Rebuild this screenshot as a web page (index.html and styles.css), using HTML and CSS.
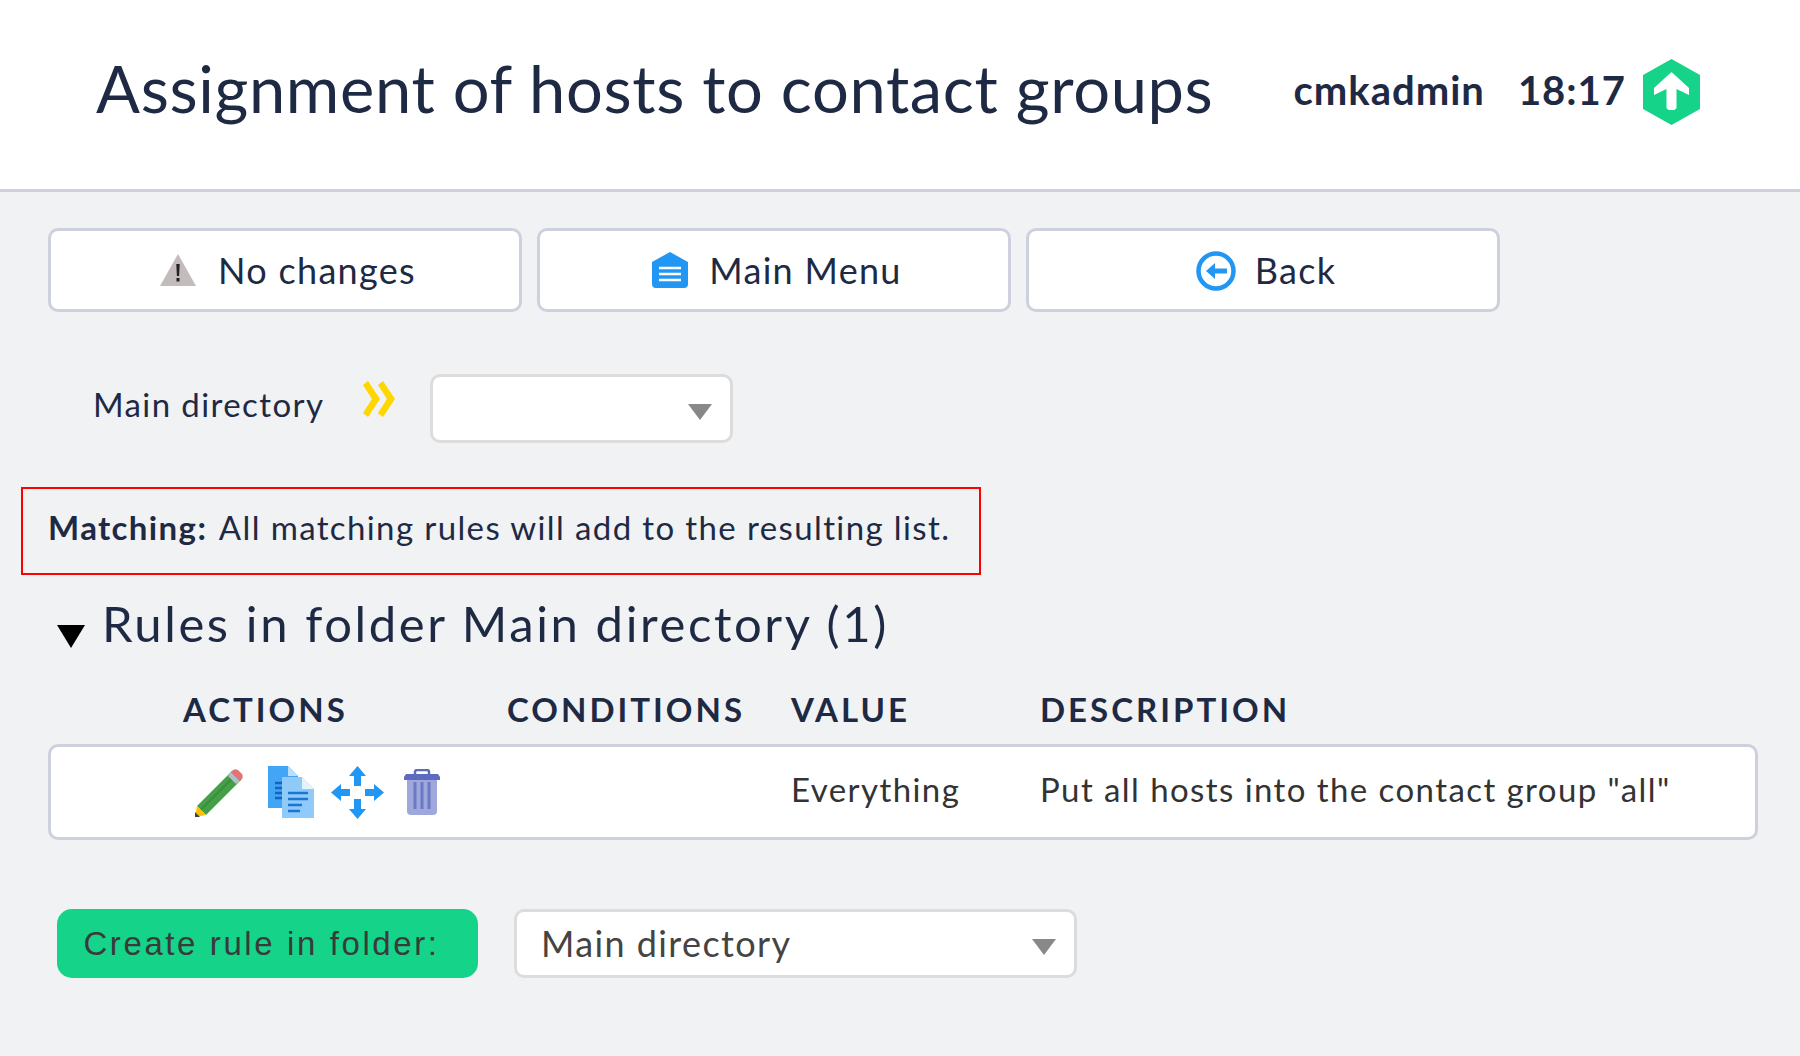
FILE: index.html
```html
<!DOCTYPE html>
<html lang="en">
<head>
<meta charset="utf-8">
<title>Assignment of hosts to contact groups</title>
<link rel="stylesheet" href="styles.css">
</head>
<body>
<header class="top">
  <h1 class="title">Assignment of hosts to contact groups</h1>
  <div class="status">
    <span class="user">cmkadmin</span>
    <span class="clock">18:17</span>
    <svg class="logo" viewBox="0 0 57 66"><path fill="#15d48a" d="M28.500 0 57 16v34L28.500 66 0 50V16z"/><path fill="#fff" d="M28.500 13 46 29v7L33.500 30v19l-2 2h-6l-2-2V30L11 36v-7z"/></svg>
  </div>
</header>
<main class="content">
  <nav class="actions">
    <a class="btn"><svg class="ico-warn" viewBox="0 0 36 32"><path fill="#c4bcbc" d="M18 0 36 32H0z"/><path fill="#222" d="M16.300 10h3.400l-.6 12h-2.200zM16.500 24h3v3.500h-3z"/></svg>No changes</a>
    <a class="btn"><svg class="ico-menu" viewBox="0 0 36 36"><path fill="#2196f3" d="M18 0 36 10v22a4 4 0 0 1-4 4H4a4 4 0 0 1-4-4V10z"/><path stroke="#fff" stroke-width="2.500" d="M7 16h22M7 22h22M7 28h22"/></svg>Main Menu</a>
    <a class="btn"><svg class="ico-back" viewBox="0 0 40 40"><circle cx="20" cy="20" r="17.500" fill="none" stroke="#2196f3" stroke-width="4.500"/><path fill="#2196f3" d="M10 20l9-8v5.500h12v5H19V28z"/></svg>Back</a>
  </nav>
  <div class="folder">
    <span class="folder-name">Main directory</span>
    <svg class="chevrons" viewBox="0 0 32 36"><path fill="#ffd600" d="M0 4 5 0l12 18L5 36l-5-4 9-14zM15 4l5-4 12 18-12 18-5-4 9-14z"/></svg>
    <div class="select select-small"></div>
  </div>
  <p class="matching"><strong>Matching:</strong> All matching rules will add to the resulting list.</p>
  <h2 class="section"><span class="fold"></span>Rules in folder Main directory (1)</h2>
  <div class="thead">
    <span class="c-actions">Actions</span>
    <span class="c-cond">Conditions</span>
    <span class="c-value">Value</span>
    <span class="c-desc">Description</span>
  </div>
  <div class="rule">
    <span class="c-actions icons">
      <svg class="i-pencil" viewBox="0 0 48 48">
        <path fill="#43a047" d="M37 2 46 11 11 46 2 37z"/>
        <path fill="#2e7d32" d="M41.500 6.500 6.500 41.500 5 40 40 5z" opacity=".5"/>
        <path fill="#b0bec5" d="M36 3l9 9-4 3-8-8z"/>
        <path fill="#e57373" d="M38 1c2-1 3-1 5 0l4 4c1 2 1 3 0 5l-2 2-9-9z"/>
        <path fill="#ffc107" d="M2 37l9 9-11 2z"/>
        <path fill="#37474f" d="M0 43l5 5-5 0z"/>
      </svg>
      <svg class="i-copy" viewBox="0 0 46 52">
        <path fill="#42a5f5" d="M0 0h20l10 10v32H0z"/>
        <path fill="#bbdefb" d="M20 0l10 10H20z"/>
        <path stroke="#1565c0" stroke-width="2.500" d="M7 17h8M7 22h8M7 27h8M7 32h8"/>
        <path fill="#90caf9" d="M14 11h20l12 12v29H14z"/>
        <path fill="#e3f2fd" d="M34 11l12 12H34z"/>
        <path stroke="#1976d2" stroke-width="2.500" d="M20 27h20M20 33h20M20 39h14M20 45h12"/>
      </svg>
      <svg class="i-move" viewBox="0 0 53 53">
        <path fill="#2196f3" d="M26.500 0l8.500 10h-5v10h-7V10h-5zM26.500 53l8.500-10h-5V33h-7v10h-5zM0 26.500 10 18v5h9v7h-9v5zM53 26.500 43 18v5h-9v7h9v5z"/>
      </svg>
      <svg class="i-trash" viewBox="0 0 36 46">
        <path fill="#9fa8da" d="M3 9h30v33a4 4 0 0 1-4 4H7a4 4 0 0 1-4-4z"/>
        <path stroke="#5c6bc0" stroke-width="3" opacity=".75" d="M11 13v27M18 13v27M25 13v27"/>
        <path fill="none" stroke="#5c6bc0" stroke-width="2.500" d="M11 6V3a2 2 0 0 1 2-2h10a2 2 0 0 1 2 2v3"/>
        <path fill="#5c6bc0" d="M2 5h32l2 3v3H0V8z"/>
      </svg>
    </span>
    <span class="c-cond"></span>
    <span class="c-value rule-text">Everything</span>
    <span class="c-desc rule-text">Put all hosts into the contact group "all"</span>
  </div>
  <div class="create">
    <button class="submit" type="button">Create rule in folder:</button>
    <div class="select select-wide">Main directory</div>
  </div>
</main>
</body>
</html>
```
FILE: styles.css
```css
* { box-sizing: border-box; }
html, body { margin: 0; height: 100%; }
body {
  background: #f1f2f4;
  color: #1e2a44;
  font-family: Lato, "Noto Sans", sans-serif;
  overflow: hidden;
}
.top {
  height: 192px;
  background: #fff;
  border-bottom: 3px solid #cfd0de;
  display: flex;
  align-items: center;
  justify-content: space-between;
  padding: 0 100px 5px 96px;
}
.title {
  margin: 0 0 9px;
  font-size: 65px;
  font-weight: 400;
  letter-spacing: .65px;
}
.status { display: flex; align-items: center; font-size: 40px; font-weight: 700; letter-spacing: 1px; }
.user, .clock { margin-bottom: 5px; }
.clock { margin-left: 33px; }
.logo { width: 57px; height: 66px; margin-left: 17px; }
.content { padding: 36px 42px 0 48px; }
.actions { display: flex; gap: 15px; }
.btn {
  width: 474px;
  height: 84px;
  padding-left: 6px;
  background: #fff;
  border: 3px solid #cfd0de;
  border-radius: 10px;
  display: flex;
  align-items: center;
  justify-content: center;
  font-size: 36px;
  letter-spacing: 1.3px;
}
.ico-warn { width: 36px; height: 32px; margin-right: 22px; }
.ico-menu { width: 36px; height: 36px; margin-right: 21px; }
.ico-back { width: 40px; height: 40px; margin: 2px 19px 0 0; }
.folder { display: flex; align-items: center; margin-top: 62px; height: 69px; padding-left: 45px; }
.folder-name { font-size: 33px; letter-spacing: 1.4px; width: 270px; margin-bottom: 9px; }
.chevrons { width: 32px; height: 36px; margin-right: 35px; margin-bottom: 20px; }
.select {
  position: relative;
  height: 69px;
  background: #fff;
  border: 3px solid #dcdcdc;
  border-radius: 10px;
}
.select::after {
  content: "";
  position: absolute;
  top: 50%;
  right: 18px;
  margin-top: -5px;
  border-left: 12px solid transparent;
  border-right: 12px solid transparent;
  border-top: 16px solid #888;
}
.select-small { width: 303px; }
.matching {
  margin: 44px 0 0 -27px;
  width: 960px;
  height: 88px;
  border: 2px solid #f00;
  padding: 0 0 9px 25px;
  display: flex;
  align-items: center;
  gap: .35em;
  font-size: 33px;
  letter-spacing: 1.38px;
}
.section { margin: 19px 0 0 9px; display: flex; align-items: center; font-size: 49px; font-weight: 400; letter-spacing: 2.6px; }
.fold {
  width: 0; height: 0;
  margin: 26px 17px 0 0;
  border-left: 14px solid transparent;
  border-right: 14px solid transparent;
  border-top: 23px solid #000;
}
.thead, .rule { display: grid; grid-template-columns: 324px 284px 249px 1fr; padding-left: 135px; }
.thead {
  margin-top: 37px;
  height: 40px;
  font-size: 33px;
  font-weight: 700;
  letter-spacing: 3px;
  text-transform: uppercase;
}
.rule {
  margin-top: 15px;
  height: 96px;
  background: #fff;
  border: 3px solid #cfd0de;
  border-radius: 10px;
  padding-left: 132px;
  align-items: center;
  color: #333;
  font-size: 33px;
  letter-spacing: 1.42px;
}
.rule-text { margin-bottom: 7px; }
.icons { display: flex; align-items: center; margin-left: 12px; }
.i-pencil { width: 48px; height: 48px; margin-top: 2px; }
.i-copy { width: 46px; height: 52px; margin-left: 25px; }
.i-move { width: 53px; height: 53px; margin-left: 17px; }
.i-trash { width: 36px; height: 46px; margin-left: 20px; }
.create { display: flex; gap: 36px; margin: 69px 0 0 9px; }
.submit {
  width: 421px;
  height: 69px;
  padding: 0 12px 0 0;
  background: #15d48a;
  border: 0;
  border-radius: 15px;
  color: #3a3a3a;
  font-family: "Liberation Sans", Arial, sans-serif;
  font-size: 33px;
  letter-spacing: 2.6px;
}
.select-wide {
  width: 563px;
  padding: 0 0 2px 24px;
  display: flex;
  align-items: center;
  color: #444;
  font-size: 36px;
  letter-spacing: 1.4px;
}
```
